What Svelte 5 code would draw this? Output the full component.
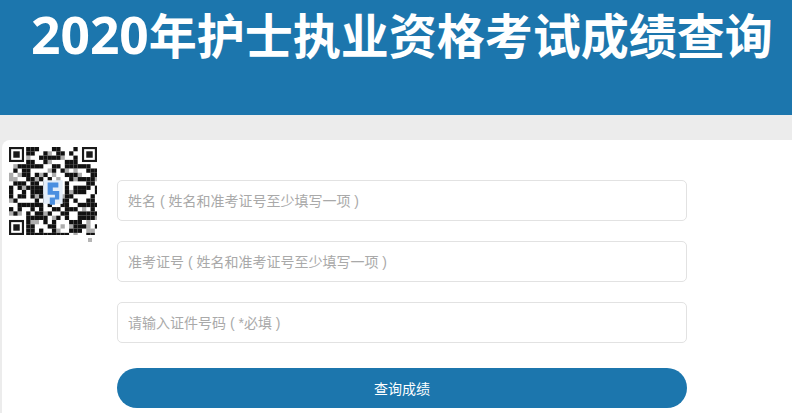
<script>
  // QR is blurred in the reference, so the data modules are just seeded noise
  const size = 41;
  let seed = 20200;
  function rand() {
    seed = (seed * 16807) % 2147483647;
    return seed / 2147483647;
  }

  function inFinder(x, y) {
    const nearLeft = x < 8;
    const nearRight = x >= size - 8;
    const nearTop = y < 8;
    const nearBottom = y >= size - 8;
    return (nearLeft && nearTop) || (nearRight && nearTop) || (nearLeft && nearBottom);
  }

  const cells = [];
  for (let y = 0; y < size; y += 2) {
    for (let x = 0; x < size; x += 2) {
      if (inFinder(x, y) || inFinder(x + 1, y + 1) || inFinder(x + 1, y) || inFinder(x, y + 1)) continue;
      const r = rand();
      if (r < 0.5) cells.push({ x, y, o: 1 });
      else if (r < 0.62) cells.push({ x, y, o: 0.35 });
    }
  }
  const finders = [
    { x: 0, y: 0 },
    { x: size - 7, y: 0 },
    { x: 0, y: size - 7 }
  ];

  const fields = [
    '姓名 ( 姓名和准考证号至少填写一项 )',
    '准考证号 ( 姓名和准考证号至少填写一项 )',
    '请输入证件号码 ( *必填 )'
  ];
</script>

<header class="top">
  <h1><span class="year">2020</span>年护士执业资格考试成绩查询</h1>
</header>

<main class="card">
  <div class="qr-wrap">
    <svg class="qr" viewBox="0 0 41 41" aria-hidden="true">
      <g class="noise">
        {#each cells as c}
          <rect x={c.x} y={c.y} width="2" height="2" fill="#111" opacity={c.o} />
        {/each}
      </g>
      {#each finders as f}
        <g class="finder">
          <rect x={f.x + 0.5} y={f.y + 0.5} width="6" height="6" fill="#fff" stroke="#1a1a1a" />
          <rect x={f.x + 2} y={f.y + 2} width="3" height="3" fill="#1a1a1a" />
        </g>
      {/each}
      <rect class="logo-bg" x="16" y="15.5" width="9" height="11" fill="#e3edf9" />
      <path class="logo" d="M18 16.5h5v2.4h-2.6v1.6h3v4h-2v2.4h-2.4v-3.4h2.4v-1.2h-3.4z" fill="#4b8fe0" />
    </svg>
    <i class="speck"></i>
  </div>

  <form class="form" onsubmit={(e) => e.preventDefault()}>
    {#each fields as placeholder}
      <input type="text" {placeholder} />
    {/each}
    <button type="submit">查询成绩</button>
  </form>
</main>

<style>
  :global(body) {
    margin: 0;
    background: #ececec;
    font-family: "Liberation Sans", "Noto Sans CJK SC", sans-serif;
    overflow: hidden;
  }

  .top {
    height: 115px;
    background: #1c76ad;
    box-sizing: border-box;
    padding-left: 31px;
  }

  h1 {
    margin: 0;
    font-family: "Open Sans", "Noto Sans CJK SC", sans-serif;
    font-size: 48px;
    line-height: 68px;
    font-weight: 700;
    color: #fff;
    white-space: nowrap;
  }

  .year {
    font-size: 51.5px;
  }

  .card {
    margin: 25px 0 0 2px;
    height: 273px;
    background: #fff;
    border-radius: 8px 0 0 0;
    display: flex;
    box-sizing: border-box;
    padding: 7px 0 0 7px;
  }

  .qr-wrap {
    position: relative;
    flex: none;
    width: 88px;
    height: 88px;
  }

  .qr {
    display: block;
    width: 88px;
    height: 88px;
  }

  .noise {
    filter: blur(0.3px);
  }

  .finder {
    filter: blur(0.2px);
  }

  .logo {
    filter: blur(0.3px);
  }

  .speck {
    position: absolute;
    left: 79px;
    top: 91px;
    width: 4px;
    height: 4px;
    background: #b5b5b5;
  }

  .form {
    width: 570px;
    margin: 33px 0 0 20px;
    display: flex;
    flex-direction: column;
    gap: 20px;
  }

  input {
    height: 41px;
    box-sizing: border-box;
    border: 1px solid #e2e2e2;
    border-radius: 5px;
    padding: 0 10px;
    font-family: inherit;
    font-size: 14px;
    background: #fff;
  }

  input::placeholder {
    color: #a9a9a9;
  }

  button {
    height: 40px;
    margin-top: 5px;
    border: none;
    border-radius: 20px;
    background: #1c76ad;
    color: #fff;
    font-family: inherit;
    font-size: 14px;
  }
</style>
